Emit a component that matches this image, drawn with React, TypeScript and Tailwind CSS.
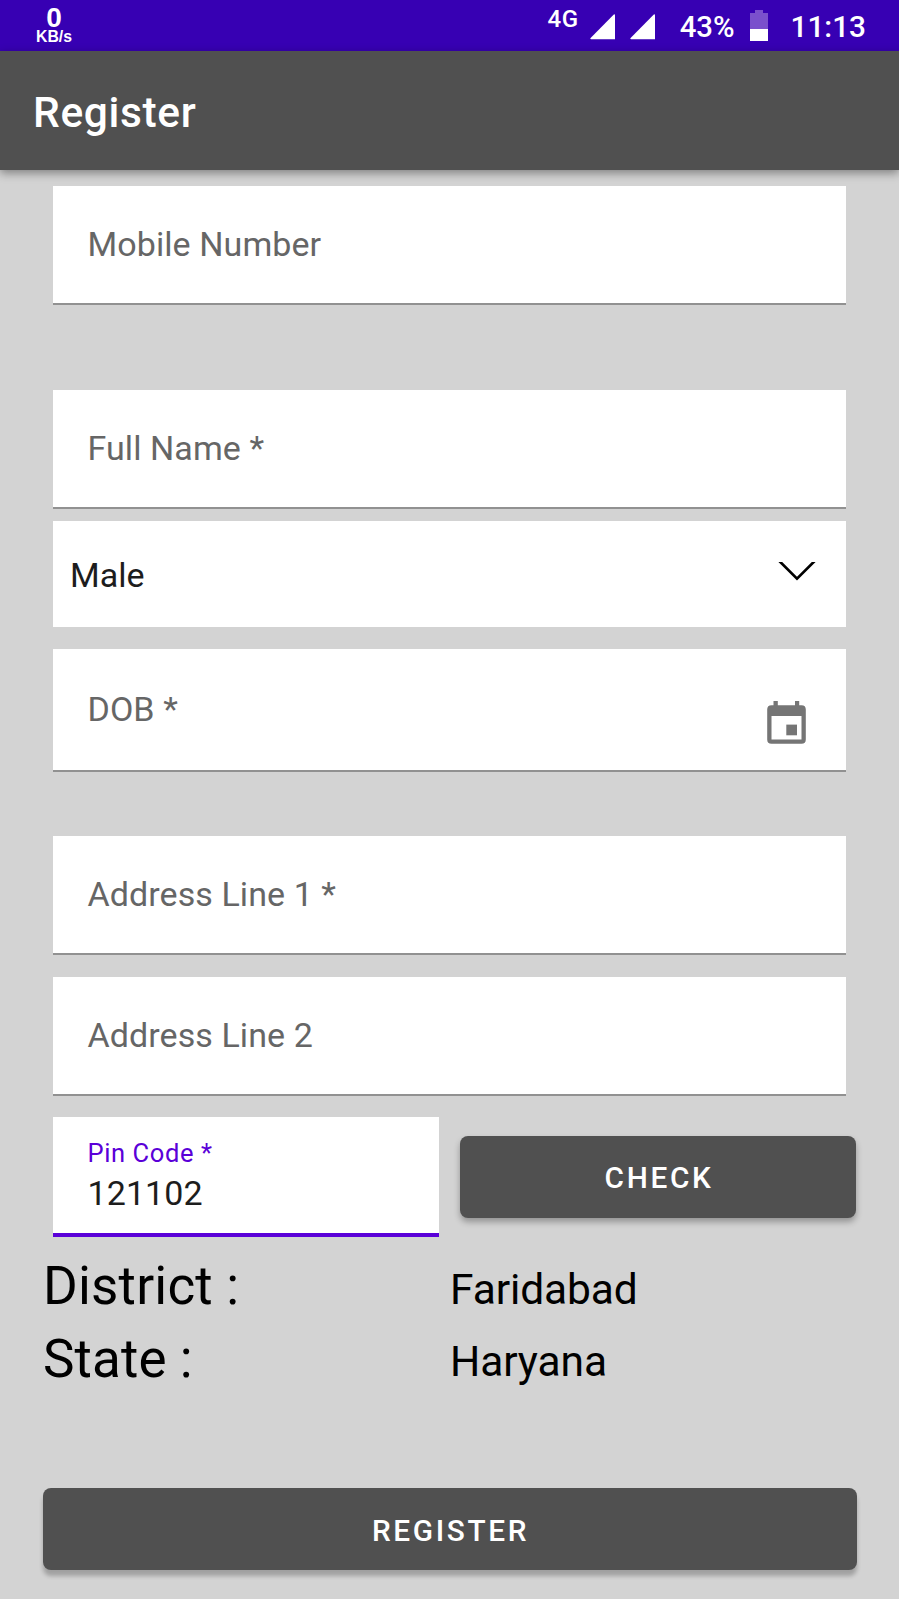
import React from "react";

function SignalIcon() {
  return (
    <svg className="h-[26px] w-[25px]" viewBox="0 0 25 26" fill="#fff">
      <path d="M23.8 0.5Q25 0 25 1.3V25.2H1.2Q-0.2 25 0.6 23.9Z" />
    </svg>
  );
}

function StatusBar() {
  return (
    <header className="flex h-[51px] items-start bg-[#3700b3] pr-[33px] pl-[36px] font-medium text-white">
      <div className="flex w-9 flex-col items-center font-['Liberation_Sans',sans-serif] font-bold">
        <span className="mt-[5px] text-[28px] leading-[26px]">0</span>
        <span className="text-[15.8px] leading-[12px]">KB/s</span>
      </div>
      <div className="ml-auto flex items-start">
        <span className="mt-[5px] text-[24px] leading-[28px] tracking-[0.6px]">4G</span>
        <div className="mt-[14px] ml-[11px] flex gap-[15px]">
          <SignalIcon />
          <SignalIcon />
        </div>
        <span className="ml-[25px] pt-[10px] text-[29.3px] leading-[34px]">43%</span>
        <svg className="mt-[10px] ml-[15px] h-[31px] w-[18px]" viewBox="0 0 18 31">
          <path d="M5 0H13V3H18V19H0V3H5Z" fill="#7a50cc" />
          <path d="M0 19H18V31H0Z" fill="#fff" />
        </svg>
        <span className="ml-[23px] pt-[10px] text-[29.75px] leading-[34px]">11:13</span>
      </div>
    </header>
  );
}

function TextField({ label, className }: { label: string; className: string }) {
  return (
    <div
      className={`flex h-[119px] items-start border-b-2 border-[#919191] bg-white px-[34.5px] text-[34px] leading-10 tracking-[0.08px] text-[#666] ${className}`}
    >
      {label}
    </div>
  );
}

function ActionButton({ label, className }: { label: string; className: string }) {
  return (
    <button
      className={`flex h-[82px] items-start justify-center rounded-[8px] bg-[#505050] pl-[2px] text-[29.75px] leading-10 font-medium tracking-[2.66px] text-white ${className}`}
    >
      {label}
    </button>
  );
}

export default function App() {
  return (
    <div className="flex h-[1599px] w-[899px] flex-col overflow-hidden bg-[#d3d3d3] font-[Roboto,sans-serif]">
      <StatusBar />
      <div className="flex h-[119px] shrink-0 items-start bg-[#505050] pt-[37px] pl-[33px] text-[42.5px] leading-[50px] font-medium tracking-[0.65px] text-white shadow-[0_3px_9px_rgba(0,0,0,0.4)]">
        Register
      </div>
      <main className="flex flex-col px-[53px]">
        <TextField label="Mobile Number" className="mt-[16px] pt-[38px]" />
        <TextField label="Full Name *" className="mt-[85px] pt-[38px]" />
        <div className="mt-[12px] flex h-[106px] items-start justify-between bg-white pt-[34px] pr-[30px] pl-[17px] text-[34px] leading-10 text-[#1d1d1d]">
          Male
          <svg className="mt-[7px] h-[19px] w-[38px] overflow-hidden" viewBox="0 0 38 19" fill="none" stroke="#000" strokeWidth="2.7">
            <path d="M0.3 -2L19 16.7L37.7 -2" />
          </svg>
        </div>
        <div className="mt-[22px] flex h-[123px] items-start justify-between border-b-2 border-[#919191] bg-white pt-[40px] pr-[40px] pl-[34.5px] text-[34px] leading-10 tracking-[0.08px] text-[#666]">
          DOB *
          <svg className="mt-[12px] h-[43px] w-[39px]" viewBox="0 0 39 43" fill="#757575">
            <path fillRule="evenodd" d="M6.5 0H10.8V4.3H28V0H32.2V4.3H34.5Q38.8 4.3 38.8 8.6V38.5Q38.8 42.8 34.5 42.8H4.5Q0.2 42.8 0.2 38.5V8.6Q0.2 4.3 4.5 4.3H6.5ZM4.5 15V38.5H34.5V15Z" />
            <path d="M19.3 23.6H30V34.3H19.3Z" />
          </svg>
        </div>
        <TextField label="Address Line 1 *" className="mt-[64px] pt-[38px]" />
        <TextField label="Address Line 2" className="mt-[22px] pt-[38px]" />
      </main>
      <div className="mt-[21px] flex h-[120px] items-start pl-[53px]">
        <div className="flex h-[120px] w-[386px] flex-col border-b-4 border-[#5a00d8] bg-white pl-[34.5px]">
          <span className="mt-[21px] text-[25.5px] leading-[30px] tracking-[0.6px] text-[#5a00d8]">Pin Code *</span>
          <span className="mt-[5px] text-[34px] leading-10 tracking-[0.08px] text-[#1d1d1d]">121102</span>
        </div>
        <ActionButton label="CHECK" className="mt-[19px] ml-[21px] w-[396px] pt-[22px] shadow-[0_4px_6px_rgba(0,0,0,0.3)]" />
      </div>
      <dl className="mt-[18px] grid grid-cols-[407px_1fr] gap-y-[7px] pl-[43px] leading-[62px] text-black">
        <dt className="text-[53px] tracking-[0.2px]">District :</dt>
        <dd className="pt-[4px] text-[42.5px] tracking-[-0.12px]">Faridabad</dd>
        <dt className="text-[53px] tracking-[0.1px]">State :</dt>
        <dd className="pt-[3px] text-[42.5px] tracking-[-0.12px]">Haryana</dd>
      </dl>
      <ActionButton label="REGISTER" className="mt-[95px] ml-[42.5px] w-[814px] pt-[23px] shadow-[0_6px_4px_rgba(0,0,0,0.24)]" />
    </div>
  );
}
